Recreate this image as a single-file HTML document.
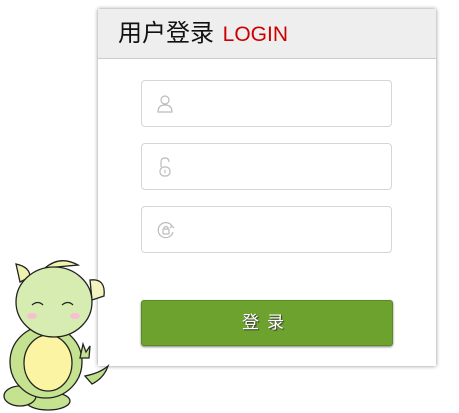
<!DOCTYPE html>
<html><head><style>
body{margin:0;width:459px;height:413px;background:#fff;position:relative;overflow:hidden;font-family:"Liberation Sans","Noto Sans CJK SC",sans-serif}
.panel{position:absolute;left:98px;top:9px;width:338px;height:357px;background:#fff;box-shadow:0 0 4px rgba(0,0,0,.45)}
.hd{height:49px;background:#eee;border-bottom:1px solid #ccc;font-size:24px;line-height:49px;padding-left:20px;color:#111}
.hd span{color:#c00;font-size:21px;margin-left:2px}
.in{position:absolute;left:43px;width:249px;height:45px;border:1px solid #d6d6d6;border-radius:4px;background:#fff}
.in svg{position:absolute;left:14px;top:13px}
.btn{position:absolute;left:43px;top:291px;width:250px;height:44px;background:#6ea22f;border:1px solid #5a8a25;border-radius:3px;box-shadow:0 1px 2px rgba(0,0,0,.5);color:#fff;text-align:center;line-height:44px;font-size:17px;letter-spacing:8px;text-shadow:1px 1px 1px #333}
</style></head><body>
<div class="panel">
<div class="hd">用户登录 <span>LOGIN</span></div>
<div class="in" style="top:71px"><svg width="18" height="20" viewBox="0 0 18 20" fill="none" stroke="#bbb" stroke-width="1.2"><circle cx="9" cy="6" r="4"/><path d="M2 18 Q2 11 9 11 Q16 11 16 18 Z"/></svg></div>
<div class="in" style="top:134px"><svg width="18" height="20" viewBox="0 0 18 20" fill="none" stroke="#bbb" stroke-width="1.2"><path d="M5 10 V5 Q5 1 9 1 Q13 1 13 5"/><rect x="4" y="10" width="10" height="9" rx="4"/><path d="M9 13v3"/></svg></div>
<div class="in" style="top:197px"><svg width="20" height="20" viewBox="0 0 20 20" fill="none" stroke="#bbb" stroke-width="1.2"><path d="M17 12 A7.5 7.5 0 1 1 16 6"/><path d="M16 6l2 2M16 6l-2 2"/><rect x="7" y="9" width="6" height="5" rx="1"/><path d="M8 9V7.5Q10 5.5 12 7.5V9"/></svg></div>
<div class="btn">登录</div>
</div>
<svg style="position:absolute;left:0;top:258px" width="120" height="155" viewBox="0 0 120 155">
<g stroke="#222" stroke-width="1.3">
<path d="M85 118 Q100 115 108 108 Q104 120 92 126 Z" fill="#bfe08a"/>
<path d="M90 22 Q106 20 104 38 L92 42 Z" fill="#f3f5c0"/>
<path d="M45 10 Q60 -3 78 7 Z" fill="#f0f3b0"/>
<path d="M20 24 L16 6 Q30 9 30 19 Z" fill="#eef2b0"/>
<ellipse cx="48" cy="143" rx="22" ry="9" fill="#c4e28f"/>
<ellipse cx="20" cy="138" rx="16" ry="10" fill="#c4e28f"/>
<ellipse cx="46" cy="104" rx="36" ry="36" fill="#c4e28f"/>
<ellipse cx="48" cy="105" rx="24" ry="28" fill="#fbf5a3"/>
<path d="M80 100 l3-14 3 8 4-6 -1 12 Z" fill="#c4e28f"/>
<ellipse cx="54" cy="44" rx="38" ry="35" fill="#d6ecb0"/>
</g>
<path d="M32 47q6-5 11 0M62 47q6-5 11 0" stroke="#222" fill="none" stroke-width="1.3"/>
<ellipse cx="32" cy="58" rx="5" ry="3" fill="#f7bfcf"/><ellipse cx="75" cy="58" rx="5" ry="3" fill="#f7bfcf"/>
</svg>
</body></html>
